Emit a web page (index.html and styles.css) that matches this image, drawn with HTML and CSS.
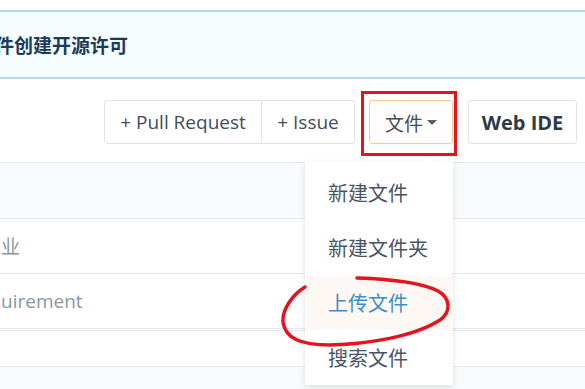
FILE: index.html
```html
<!DOCTYPE html>
<html lang="zh">
<head>
<meta charset="utf-8">
<link rel="stylesheet" href="styles.css">
</head>
<body>
<div class="page">
  <div class="banner"><span class="banner-text">件创建开源许可</span></div>
  <div class="toolbar">
    <div class="btn-group">
      <button class="btn">+ Pull Request</button>
      <button class="btn">+ Issue</button>
    </div>
    <button class="btn btn-file">文件<span class="caret"></span></button>
    <button class="btn btn-bold">Web IDE</button>
  </div>
  <div class="table">
    <div class="row row-head"></div>
    <div class="row"><span class="cell-text">业</span></div>
    <div class="row"><span class="cell-text">uirement</span></div>
    <div class="row row-split"></div>
    <div class="row-tail"></div>
  </div>

  <div class="menu">
    <div class="menu-notch"></div>
    <div class="menu-item">新建文件</div>
    <div class="menu-item">新建文件夹</div>
    <div class="menu-item active">上传文件</div>
    <div class="menu-item">搜索文件</div>
  </div>

  <div class="mark-rect"></div>
  <svg class="mark-circle" width="585" height="389" viewBox="0 0 585 389">
    <path d="M305 287 C292 295 282 310 283 322 C285 338 300 345 330 345 C370 344 415 336 440 320 C452 311 450 298 438 291 C420 282 390 279 357 278" fill="none" stroke="#e5131d" stroke-width="3.5" stroke-linecap="round"/>
  </svg>
</div>
</body>
</html>
```
FILE: styles.css
```css
* { box-sizing: border-box; }
html, body { margin: 0; padding: 0; background: #fff; }
body { width: 585px; height: 389px; overflow: hidden; font-family: "Open Sans", "Noto Sans CJK SC", sans-serif; }
.page { position: relative; width: 585px; height: 389px; padding-top: 10px; }

.banner {
  height: 69px;
  background: #f6fdff;
  border-top: 2px solid #b2d9e5;
  border-bottom: 2px solid #b2d9e5;
  display: flex;
  align-items: center;
  overflow: hidden;
}
.banner-text {
  margin-left: -5px;
  font-family: "Noto Sans CJK SC", sans-serif;
  font-weight: 700;
  font-size: 19px;
  color: #1c3b5a;
  white-space: nowrap;
}

.toolbar {
  display: flex;
  justify-content: flex-end;
  align-items: center;
  padding: 21px 8px 0 0;
  height: 65px;
}
.btn-group { display: flex; margin-right: 14px; }
.btn {
  height: 44px;
  padding: 0 15px;
  border: 1px solid #dfe4ea;
  background: #fff;
  border-radius: 3px;
  font-family: "Open Sans", "Noto Sans CJK SC", sans-serif;
  font-size: 19px;
  color: #414d5c;
  display: flex;
  align-items: center;
}
.btn-group .btn:first-child { border-radius: 3px 0 0 3px; width: 158px; justify-content: center; }
.btn-group .btn:last-child { border-radius: 0 3px 3px 0; border-left: none; width: 93px; justify-content: center; }
.btn-file {
  width: 84px;
  justify-content: center;
  border-color: #f6cb9c;
  background: #fffefc;
  font-family: "Noto Sans CJK SC", sans-serif;
  font-size: 19px;
  margin-right: 15px;
  padding: 0;
}
.caret {
  width: 0; height: 0;
  margin-left: 4px;
  border-left: 5px solid transparent;
  border-right: 5px solid transparent;
  border-top: 5px solid #555e6a;
}
.btn-bold { width: 109px; justify-content: center; font-weight: 700; font-size: 20px; padding: 0; color: #2f3a48; }

.table { margin-top: 18px; }
.row { height: 55px; border-top: 1px solid #e3e8ee; display: flex; align-items: center; }
.row-head { height: 56px; background: #f8fafb; }
.cell-text { color: #8a96a3; font-size: 19px; padding-left: 1px; font-family: "Open Sans", "Noto Sans CJK SC", sans-serif; }
.row-split { height: 38px; border-top: 3px double #e3e8ee; }
.row-tail { height: 30px; background: #f8fafb; border-top: 1px solid #e3e8ee; }

.menu {
  position: absolute;
  left: 305px;
  top: 162px;
  width: 148px;
  height: 223px;
  background: #fff;
  box-shadow: 0 2px 6px rgba(0,0,0,0.12);
  padding-top: 3px;
}
.menu-notch {
  position: absolute;
  top: -5px;
  left: 118px;
  width: 0; height: 0;
  border-left: 5px solid transparent;
  border-right: 5px solid transparent;
  border-bottom: 5px solid #fff;
}
.menu-item {
  height: 55px;
  display: flex;
  align-items: center;
  padding-left: 23px;
  font-family: "Noto Sans CJK SC", sans-serif;
  font-size: 20px;
  color: #4a5464;
}
.menu-item.active { background: #fdf8f3; color: #3a8ec9; }

.mark-rect {
  position: absolute;
  left: 361px;
  top: 91px;
  width: 96px;
  height: 65px;
  border: 3px solid #e3141f;
}
.mark-circle { position: absolute; left: 0; top: 0; pointer-events: none; }
```
